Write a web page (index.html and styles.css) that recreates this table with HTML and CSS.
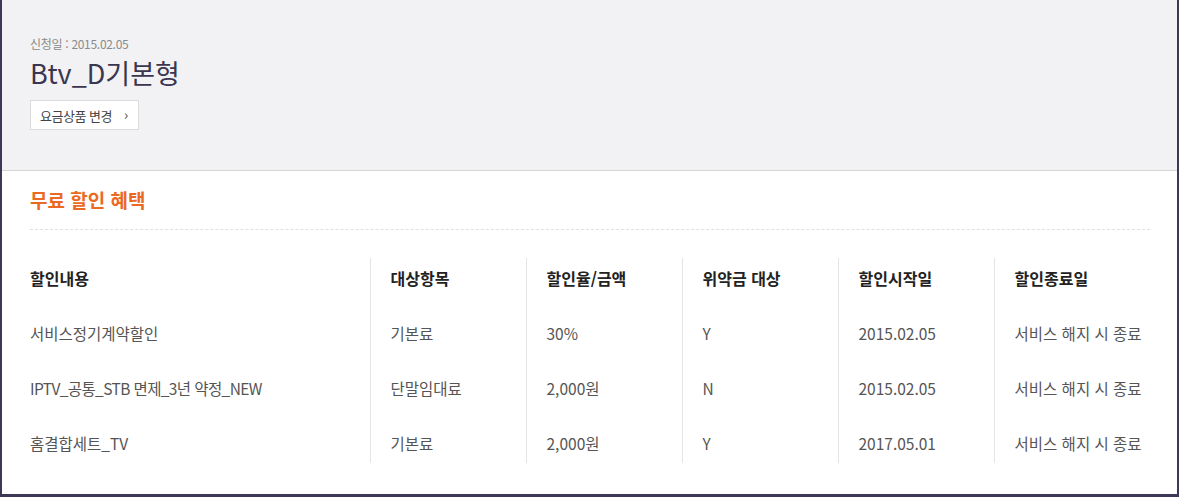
FILE: index.html
```html
<!DOCTYPE html>
<html lang="ko">
<head>
<meta charset="utf-8">
<title>Btv_D기본형</title>
<link rel="stylesheet" href="styles.css">
</head>
<body>
<div class="frame">
  <header class="summary">
    <p class="date">신청일 : 2015.02.05</p>
    <h1 class="plan">Btv_D기본형</h1>
    <button class="change-btn" type="button">요금상품 변경<span class="chev">›</span></button>
  </header>
  <section class="benefit">
    <h2 class="benefit-title">무료 할인 혜택</h2>
    <table class="benefit-table">
      <colgroup>
        <col class="c-wide"><col class="c-n"><col class="c-n"><col class="c-n"><col class="c-n"><col class="c-n">
      </colgroup>
      <thead>
        <tr><th>할인내용</th><th>대상항목</th><th>할인율/금액</th><th>위약금 대상</th><th>할인시작일</th><th>할인종료일</th></tr>
      </thead>
      <tbody>
        <tr><td>서비스정기계약할인</td><td>기본료</td><td>30%</td><td>Y</td><td>2015.02.05</td><td>서비스 해지 시 종료</td></tr>
        <tr><td class="latin">IPTV_공통_STB 면제_3년 약정_NEW</td><td>단말임대료</td><td>2,000원</td><td>N</td><td>2015.02.05</td><td>서비스 해지 시 종료</td></tr>
        <tr><td>홈결합세트_TV</td><td>기본료</td><td>2,000원</td><td>Y</td><td>2017.05.01</td><td>서비스 해지 시 종료</td></tr>
      </tbody>
    </table>
  </section>
</div>
</body>
</html>
```
FILE: styles.css
```css
* { box-sizing: border-box; }
html, body { margin: 0; padding: 0; background: #fff; }
body {
  font-family: "Noto Sans CJK KR", "Noto Sans", sans-serif;
  color: #555;
  width: 1179px;
  height: 497px;
  overflow: hidden;
}
.frame {
  width: 1179px;
  height: 497px;
  border-left: 2px solid #3c3956;
  border-right: 2px solid #3c3956;
  border-bottom: 3px solid #3c3956;
  background: #fff;
}
.summary {
  height: 171px;
  background: #f2f2f4;
  border-bottom: 1px solid #d6d6d9;
  padding: 36px 28px 0;
}
.date {
  margin: 0;
  font-size: 12px;
  line-height: 16px;
  color: #8a8a8a;
  letter-spacing: -0.3px;
}
.plan {
  margin: 3px 0 0;
  font-size: 27px;
  line-height: 36px;
  font-weight: 400;
  color: #3a3650;
}
.change-btn {
  margin-top: 9px;
  height: 30px;
  padding: 0 10px 0 9px;
  border: 1px solid #dcdcdf;
  background: #fff;
  font-family: inherit;
  font-size: 13px;
  color: #444;
  display: inline-flex;
  align-items: center;
  gap: 12px;
  letter-spacing: -0.5px;
}
.chev { font-size: 14px; line-height: 1; position: relative; top: -1px; }
.benefit { padding: 17px 27px 0 28px; }
.benefit-title {
  margin: 0;
  padding-bottom: 17px;
  border-bottom: 1px dashed #e0e0e0;
  font-size: 19px;
  line-height: 24px;
  font-weight: 700;
  color: #ea6a24;
}
.benefit-table {
  margin-top: 28px;
  width: 1120px;
  border-collapse: collapse;
  table-layout: fixed;
}
.c-wide { width: 340px; }
.c-n { width: 156px; }
.benefit-table th, .benefit-table td {
  text-align: left;
  font-size: 15.5px;
  line-height: 20px;
  padding: 0 0 0 20px;
  white-space: nowrap;
  border-left: 1px solid #e4e4e6;
}
.benefit-table th:first-child, .benefit-table td:first-child {
  border-left: 0;
  padding-left: 0;
}
.benefit-table th {
  height: 40px;
  font-size: 16px;
  font-weight: 700;
  color: #222;
  vertical-align: middle;
}
.benefit-table td {
  height: 55px;
  padding-top: 25px;
  vertical-align: top;
  color: #555;
}
.benefit-table td.latin { letter-spacing: -0.6px; }
```
